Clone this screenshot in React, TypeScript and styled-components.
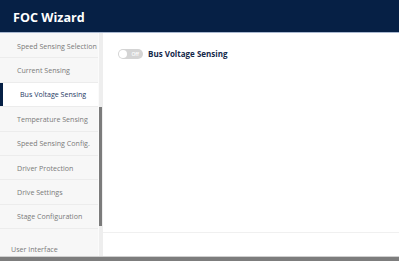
import React from 'react'
import styled, { createGlobalStyle } from 'styled-components'

const Global = createGlobalStyle`
    html, body {
        margin: 0;
        padding: 0;
        background: #ffffff;
        font-family: "Open Sans", "Liberation Sans", sans-serif;
    }
`;

const Page = styled.div`
    width: 399px;
    height: 261px;
    display: flex;
    flex-direction: column;
    overflow: hidden;
`;

const Header = styled.div`
    height: 33px;
    background-color: #062045;
    border-bottom: 1px solid #a9b8d0;
    display: flex;
    align-items: center;
    padding-left: 13px;
    padding-top: 2px;
    box-sizing: border-box;
    flex-shrink: 0;
`;

const Title = styled.div`
    color: #ffffff;
    font-size: 12.6px;
    font-weight: 700;
`;

const Body = styled.div`
    flex: 1;
    display: flex;
    min-height: 0;
`;

const Sidebar = styled.div`
    width: 98px;
    background-color: #f7f7f7;
    display: flex;
    flex-direction: column;
    border-right: 1px solid #fbfbfb;
    padding-top: 1px;
`;

const Item = styled.div<{ $active?: boolean }>`
    height: 24.4px;
    box-sizing: border-box;
    border-bottom: 1px solid #ececec;
    display: flex;
    align-items: center;
    padding-left: ${p => (p.$active ? '20px' : '17px')};
    font-size: 7.1px;
    color: ${p => (p.$active ? '#1f3a66' : '#7a7a7a')};
    background-color: ${p => (p.$active ? '#ffffff' : 'transparent')};
    box-shadow: ${p => (p.$active ? 'inset 3px 0 0 #062045' : 'none')};
    white-space: nowrap;
`;

const Footer = styled.div`
    flex: 1;
    display: flex;
    align-items: flex-end;
    padding: 0 0 2px 11px;
    font-size: 7.1px;
    color: #7a7a7a;
`;

const Track = styled.div`
    width: 4px;
    background-color: #eeeeee;
    display: flex;
    flex-direction: column;
    padding-top: 74px;
    padding-bottom: 30px;
`;

const Thumb = styled.div`
    flex: 1;
    background-color: #7b7b7b;
    width: 3px;
`;

const Main = styled.div`
    flex: 1;
    display: flex;
    flex-direction: column;
`;

const Content = styled.div`
    flex: 1;
    padding: 15px 0 0 15px;
`;

const Row = styled.div`
    display: flex;
    align-items: center;
    gap: 5px;
`;

const Toggle = styled.div`
    width: 25px;
    height: 10px;
    border-radius: 6px;
    background-color: #d4d4d4;
    position: relative;
    display: flex;
    align-items: center;
    justify-content: flex-end;
    padding-right: 4px;
    box-sizing: border-box;
`;

const Knob = styled.div`
    position: absolute;
    left: 1px;
    top: 1px;
    width: 8px;
    height: 8px;
    border-radius: 50%;
    background-color: #ffffff;
`;

const ToggleText = styled.span`
    font-size: 5px;
    color: #ffffff;
    font-weight: 600;
`;

const Label = styled.div`
    font-size: 8px;
    font-weight: 700;
    color: #14284a;
`;

const Bottom = styled.div`
    height: 23px;
    border-top: 1px solid #f0f0f0;
`;

const StatusBar = styled.div`
    height: 4px;
    background-color: #7d7d7d;
    border-top: 1px solid #d0d0d0;
    flex-shrink: 0;
`;

const items = [
    'Speed Sensing Selection',
    'Current Sensing',
    'Bus Voltage Sensing',
    'Temperature Sensing',
    'Speed Sensing Config.',
    'Driver Protection',
    'Drive Settings',
    'Stage Configuration',
]

export default function App() {
    const active = 'Bus Voltage Sensing'

    return (
        <Page>
            <Global />
            <Header>
                <Title>FOC Wizard</Title>
            </Header>
            <Body>
                <Sidebar>
                    {items.map(name => (
                        <Item key={name} $active={name === active}>
                            {name}
                        </Item>
                    ))}
                    <Footer>User Interface</Footer>
                </Sidebar>
                <Track>
                    <Thumb />
                </Track>
                <Main>
                    <Content>
                        <Row>
                            <Toggle>
                                <Knob />
                                <ToggleText>Off</ToggleText>
                            </Toggle>
                            <Label>Bus Voltage Sensing</Label>
                        </Row>
                    </Content>
                    <Bottom />
                </Main>
            </Body>
            <StatusBar />
        </Page>
    )
}
